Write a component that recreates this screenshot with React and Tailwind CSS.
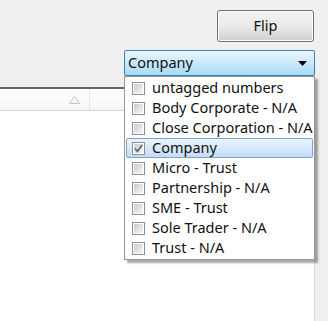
import { useState } from "react";

const items = [
  { label: "untagged numbers", checked: false },
  { label: "Body Corporate - N/A", checked: false },
  { label: "Close Corporation - N/A", checked: false },
  { label: "Company", checked: true },
  { label: "Micro - Trust", checked: false },
  { label: "Partnership - N/A", checked: false },
  { label: "SME - Trust", checked: false },
  { label: "Sole Trader - N/A", checked: false },
  { label: "Trust - N/A", checked: false },
];

const CheckBox = ({ checked }) => {
  return (
    <div className="w-[13px] h-[13px] border border-[#8e8f8f] bg-white p-[1px] shrink-0">
      <div className="w-full h-full bg-gradient-to-br from-[#cbcbcb] to-[#f7f7f7] flex items-center justify-center">
        {checked && (
          <svg width="9" height="9" viewBox="0 0 9 9">
            <path d="M1 4.5 L3.5 7.5 L8 1" fill="none" stroke="#4d6185" strokeWidth="1.6" />
          </svg>
        )}
      </div>
    </div>
  );
};

const App = () => {
  const [list] = useState(items);

  return (
    <div className="w-[328px] h-[321px] bg-[#f0f0f0] relative overflow-hidden text-[14.5px] text-[#111]" style={{ fontFamily: '"Noto Sans", sans-serif' }}>

      {/* toolbar */}
      <div className="h-[87px] flex flex-col items-end pr-[13px] pt-[10px]">
        <button className="w-[97px] h-[32px] mr-[1px] rounded-[3px] border border-[#707070] bg-gradient-to-b from-[#f2f2f2] via-[#ebebeb] to-[#cfcfcf] shadow-[inset_0_0_0_1px_#fcfcfc] text-[14.5px]">
          Flip
        </button>
        <div className="mt-[8px] w-[191px] h-[26px] rounded-[2px] border border-[#3c7fb1] bg-gradient-to-b from-[#eaf6fd] via-[#c9e9fa] to-[#a7d9f5] flex items-center justify-between pl-[3px] pr-[7px]">
          <span>Company</span>
          <svg width="9" height="5" viewBox="0 0 9 5">
            <path d="M0 0 H9 L4.5 5 Z" fill="#000" />
          </svg>
        </div>
      </div>

      {/* grid area */}
      <div className="w-[315px] h-[234px] bg-white border-t-2 border-[#646464] border-r border-r-[#dadada]">
        <div className="h-[22px] flex bg-gradient-to-b from-white to-[#f6f7f8] border-b border-[#d5d5d5]">
          <div className="w-[90px] border-r border-[#e3e4e5] flex items-center justify-end pr-[9px]">
            <svg width="11" height="8" viewBox="0 0 11 8">
              <path d="M0.5 7.5 L5.5 0.5 L10.5 7.5 Z" fill="none" stroke="#c4c4c4" />
            </svg>
          </div>
        </div>
      </div>

      {/* open dropdown */}
      <div className="absolute left-[124px] top-[76px] w-[191px] border border-[#979797] bg-white py-[1px] px-[1px] shadow-[3px_3px_2px_rgba(0,0,0,0.35)]">
        {list.map(item => (
          <div
            key={item.label}
            className={
              item.checked
                ? "h-[20px] flex items-center pl-[5px] rounded-[2px] border border-[#7da2ce] bg-gradient-to-b from-[#ebf4fd] to-[#c5dcf8]"
                : "h-[20px] flex items-center pl-[5px] border border-transparent"
            }
          >
            <CheckBox checked={item.checked} />
            <span className="ml-[7px] whitespace-nowrap">{item.label}</span>
          </div>
        ))}
      </div>
    </div>
  );
};

export default App;
